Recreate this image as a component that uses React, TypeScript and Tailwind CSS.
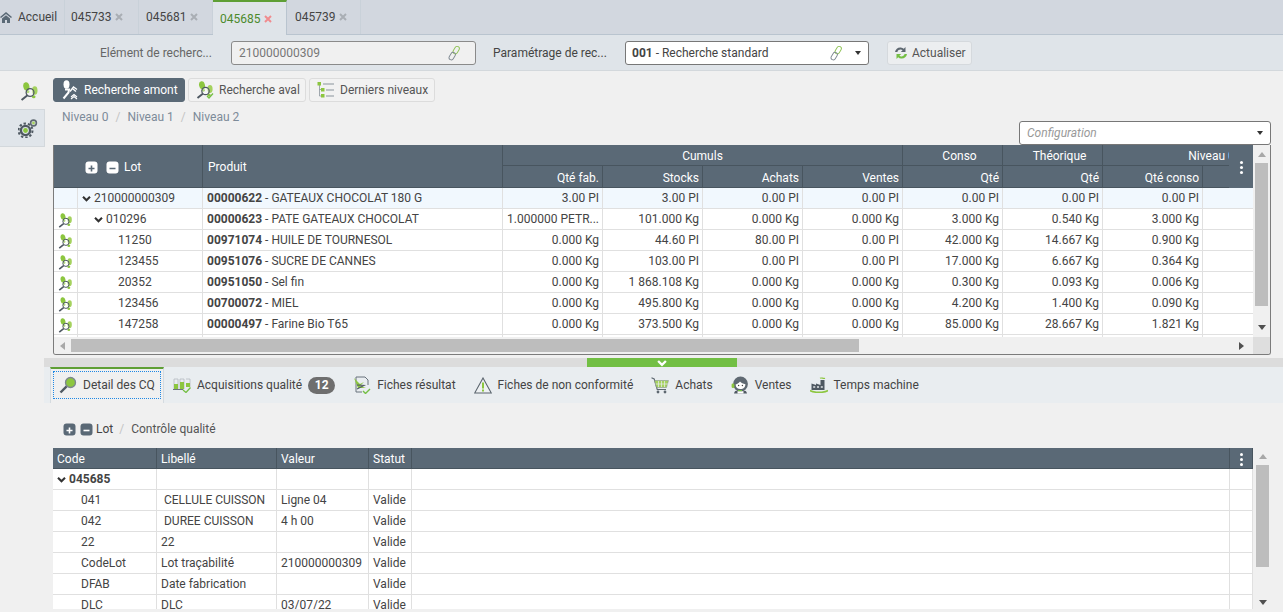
import React from "react";

const Chev = ({ w = 9, c = "#333" }: { w?: number; c?: string }) => (
  <svg width={w} height={w} viewBox="0 0 9 9" className="shrink-0" fill="none">
    <path d="M1 2.7L4.5 6.2L8 2.7" stroke={c} strokeWidth="2.1" />
  </svg>
);

const Close = ({ red }: { red?: boolean }) => (
  <svg width="8" height="8" viewBox="0 0 8 8" className="shrink-0">
    <path d="M1 1L7 7M7 1L1 7" stroke={red ? "#f08c8f" : "#a9aeb4"} strokeWidth="2" />
  </svg>
);

const Home = () => (
  <svg width="12" height="11" viewBox="0 0 12 11" className="shrink-0">
    <path d="M6 0L12 5L11 6L6 2L1 6L0 5Z" fill="#5a6976" />
    <path d="M2 6.5L6 3.2L10 6.5V11H7V8H5V11H2Z" fill="#5a6976" />
  </svg>
);

const Caret = () => (
  <svg width="6" height="4" viewBox="0 0 6 4" className="shrink-0">
    <path d="M0 0H6L3 4Z" fill="#333" />
  </svg>
);

const LinkIcon = () => (
  <svg width="14" height="16" viewBox="0 0 14 16" className="shrink-0" fill="none">
    <rect x="7" y="1" width="4.5" height="8" rx="2.2" transform="rotate(30 9 5)" stroke="#8cc152" strokeWidth="0.9" />
    <rect x="3" y="7" width="4.5" height="8" rx="2.2" transform="rotate(30 5 11)" stroke="#7d8790" strokeWidth="0.9" />
  </svg>
);

const Refresh = () => (
  <svg width="14" height="14" viewBox="0 0 14 14" className="shrink-0">
    <path d="M1 6C1.5 3 4 1.2 6.8 1.5C8 1.6 9 2 9.8 2.8L11.5 1V6H6.8L8.6 4.2C7 3 4 3.5 3.4 6Z" fill="#5d6770" />
    <path d="M13 8C12.5 11 10 12.8 7.2 12.5C6 12.4 5 12 4.2 11.2L2.5 13V8H7.2L5.4 9.8C7 11 10 10.5 10.6 8Z" fill="#74bf44" />
  </svg>
);

const Trace = ({ s = 18, check }: { s?: number; check?: boolean }) => (
  <svg width={s} height={s} viewBox="0 0 18 18" className="shrink-0" fill="none">
    <ellipse cx="6" cy="4.2" rx="2.9" ry="4" fill="#8cc63f" transform="rotate(-12 6 4.2)" />
    <ellipse cx="7.4" cy="9.3" rx="1.6" ry="1.4" fill="#8cc63f" />
    <ellipse cx="14" cy="8" rx="2.6" ry="4" fill="#a5d25e" />
    <ellipse cx="13" cy="14" rx="1.7" ry="1.5" fill="#8cc63f" />
    <circle cx="9.5" cy="10" r="3.7" stroke="#4d5761" strokeWidth="1.2" fill="#ffffff55" />
    <path d="M6.8 12.7L1.5 17" stroke="#4d5761" strokeWidth="1.9" />
    {check && <path d="M11 15L13 17L17 12.5" stroke="#74bf44" strokeWidth="1.3" />}
  </svg>
);

const Amont = () => (
  <svg width="18" height="20" viewBox="0 0 18 20" className="shrink-0" fill="none">
    <ellipse cx="5.5" cy="4.5" rx="3" ry="4.2" fill="#fff" />
    <path d="M4 9.5H8L7.5 12.5L2.5 18.5" stroke="#fff" strokeWidth="2" />
    <path d="M9 11.5L12.5 7L16 9.5M12 9L15 11.5" stroke="#fff" strokeWidth="1.4" />
    <path d="M10 17L13 14.5L16 17M10 19L13 16.5L16 19" stroke="#fff" strokeWidth="1.1" />
  </svg>
);

const TreeIcon = () => (
  <svg width="18" height="18" viewBox="0 0 18 18" className="shrink-0" fill="none">
    <path d="M2.5 3V15H5M2.5 8.5H5" stroke="#8a949c" strokeWidth="0.8" />
    <rect x="0.5" y="1" width="3.5" height="3.5" fill="#8cc63f" />
    <rect x="4" y="7" width="3.5" height="3.5" fill="#8cc63f" />
    <rect x="4" y="13" width="3.5" height="3.5" fill="#8cc63f" />
    <path d="M6 3H17M9 9H17M9 15H17" stroke="#8a949c" strokeWidth="1" />
  </svg>
);

const Gears = () => (
  <svg width="20" height="19" viewBox="0 0 20 19" className="shrink-0" fill="none">
    <circle cx="7.5" cy="11.5" r="7" stroke="#4f5962" strokeWidth="2" strokeDasharray="2.4 2" />
    <circle cx="7.5" cy="11.5" r="4.6" stroke="#4f5962" strokeWidth="2.4" />
    <circle cx="7.5" cy="11.5" r="2.4" fill="#8cc63f" />
    <circle cx="15.5" cy="4" r="2.9" stroke="#5f6972" strokeWidth="1.6" />
    <circle cx="15.5" cy="4" r="1.4" fill="#a5d25e" />
  </svg>
);

const Magnifier = () => (
  <svg width="18" height="18" viewBox="0 0 18 18" className="shrink-0" fill="none">
    <circle cx="11.5" cy="6.5" r="5" fill="#8cc63f" stroke="#7d8790" strokeWidth="1.3" />
    <path d="M7.6 10.4L1.5 16.5" stroke="#4f5962" strokeWidth="2.4" />
  </svg>
);

const Tubes = () => (
  <svg width="18" height="16" viewBox="0 0 18 16" className="shrink-0" fill="none">
    <path d="M1 2H5V12H1ZM7 2H11V12H7ZM13 2H17V10" stroke="#b4bac0" strokeWidth="0.8" />
    <path d="M1 7H5V12H1ZM7 5H11V12H7ZM13 6H17V10H13Z" fill="#8cc63f" />
    <path d="M0 12.5H10" stroke="#6b757e" strokeWidth="1" />
    <path d="M10 13L13 15.5L17.5 10.5" stroke="#74bf44" strokeWidth="1.3" />
  </svg>
);

const DocCheck = () => (
  <svg width="18" height="18" viewBox="0 0 18 18" className="shrink-0" fill="none">
    <path d="M3 1H12L15 4V9M3 1V16H9" stroke="#69737c" strokeWidth="1" />
    <path d="M1 2L7 8L11 6L7 10L13 12H5Z" fill="#8cc63f" />
    <path d="M4 9L11 9.5L4 13" stroke="#4f5962" strokeWidth="1.1" />
    <path d="M10 15L12.5 17.5L17 13" stroke="#74bf44" strokeWidth="1.4" />
  </svg>
);

const Warn = () => (
  <svg width="18" height="17" viewBox="0 0 18 17" className="shrink-0" fill="none">
    <path d="M9 1L17.3 16H0.7Z" stroke="#5a646d" strokeWidth="1.1" fill="#eef1f3" />
    <rect x="8" y="5.5" width="2" height="6" fill="#8cc63f" />
    <rect x="8" y="12.5" width="2" height="2" fill="#8cc63f" />
  </svg>
);

const Cart = () => (
  <svg width="18" height="17" viewBox="0 0 18 17" className="shrink-0" fill="none">
    <path d="M0.5 0.8L3.2 2L6.2 12.5H15" stroke="#5d6770" strokeWidth="1.1" />
    <path d="M3.5 3.5H17.5L15.5 10.5H5.5Z" fill="#a5d25e" stroke="#7d8790" strokeWidth="0.5" />
    <path d="M7.5 4V10M10.5 4V10M13.5 4V10M4.5 7H17" stroke="#e9edf0" strokeWidth="0.7" />
    <circle cx="7" cy="15" r="1.4" fill="#5d6770" />
    <circle cx="14" cy="15" r="1.4" fill="#5d6770" />
  </svg>
);

const Agent = () => (
  <svg width="18" height="18" viewBox="0 0 18 18" className="shrink-0" fill="none">
    <circle cx="9.5" cy="8" r="7.4" fill="#5f6972" />
    <path d="M4.6 8.4C6.5 8 8 7 9 5.6C10.2 7 12.2 8 14.4 8.2C14.4 11.4 12.2 13 9.5 13C6.8 13 4.6 11.4 4.6 8.4Z" fill="#fff" />
    <circle cx="7.6" cy="9.5" r="0.7" fill="#444" />
    <circle cx="11.4" cy="9.5" r="0.7" fill="#444" />
    <rect x="0.6" y="7.5" width="2.8" height="4.5" rx="1.3" fill="#8cc63f" />
    <path d="M3 17.5C3.4 15 5 14.4 6.5 14.4H12.5C14 14.4 15.6 15 16 17.5Z" fill="#4f5962" />
    <path d="M6.5 15.2H12.5V17.5H6.5Z" fill="#fff" />
    <path d="M7 14.6H11" stroke="#74bf44" strokeWidth="1.2" />
  </svg>
);

const Factory = () => (
  <svg width="18" height="16" viewBox="0 0 18 16" className="shrink-0" fill="none">
    <path d="M1.5 13V6.5L6 8V6.5L10.5 8V3H14.5V13Z" fill="#4f5962" />
    <path d="M10 1.2C11.5 0.4 13.5 2 15 1.2" stroke="#8cc63f" strokeWidth="1.2" />
    <path d="M3.2 10H5.2M7 10H9M10.8 10H12.8" stroke="#e2e5e8" strokeWidth="1.6" />
    <path d="M0 13.5C4 16 14 16 18 13.5" stroke="#8cc63f" strokeWidth="1.6" />
  </svg>
);

const Square = ({ minus, dark }: { minus?: boolean; dark?: boolean }) => (
  <svg width="13" height="13" viewBox="0 0 13 13" className="shrink-0">
    <rect x="0.5" y="0.5" width="12" height="12" rx="3" fill={dark ? "#5a6976" : "#fff"} />
    <path
      d={minus ? "M3.5 7.5H9.5" : "M3.5 7.5H9.5M6.5 4.5V10.5"}
      stroke={dark ? "#fff" : "#5a6976"}
      strokeWidth="1.6"
    />
  </svg>
);

const Tri = ({ d, c = "#666" }: { d: "u" | "d" | "l" | "r"; c?: string }) => {
  const p = { u: "M0 6H8L4 1Z", d: "M0 2H8L4 7Z", l: "M6 0V8L1 4Z", r: "M2 0V8L7 4Z" }[d];
  return (
    <svg width="8" height="8" viewBox="0 0 8 8" className="shrink-0">
      <path d={p} fill={c} />
    </svg>
  );
};

const Dots = () => (
  <div className="flex flex-col gap-[2px] items-center">
    <span className="w-[3px] h-[3px] bg-white rounded-full" />
    <span className="w-[3px] h-[3px] bg-white rounded-full" />
    <span className="w-[3px] h-[3px] bg-white rounded-full" />
  </div>
);

const Tab = ({ label, active, pl }: { label: string; active?: boolean; pl: string }) => (
  <div
    className={
      active
        ? `w-[74px] h-[35px] flex items-center gap-[4px] ${pl} border-t-2 border-r border-[#b9c4cf] border-t-[#5f9f35] bg-[#dfe4e9] text-[#4c8a2c]`
        : `w-[74px] h-[34px] flex items-center gap-[4px] ${pl} border-r border-[#c9d1d9] text-[#444]`
    }
  >
    <span>{label}</span>
    <Close red={active} />
  </div>
);

const Btn = ({
  icon,
  label,
  w,
  active,
}: {
  icon: React.ReactNode;
  label: string;
  w: string;
  active?: boolean;
}) => (
  <div
    className={`h-[24px] flex items-center gap-[5px] pl-[7px] rounded-[3px] border ${w} ${
      active ? "bg-[#5a6976] border-[#5a6976] text-white" : "bg-[#f2f2f2] border-[#dcdcdc] text-[#555]"
    }`}
  >
    {icon}
    <span className="whitespace-nowrap">{label}</span>
  </div>
);

const upperRows = [
  ["210000000309", "00000622", "GATEAUX CHOCOLAT 180 G", "3.00 PI", "3.00 PI", "0.00 PI", "0.00 PI", "0.00 PI", "0.00 PI", "0.00 PI"],
  ["010296", "00000623", "PATE GATEAUX CHOCOLAT", "1.000000 PETR...", "101.000 Kg", "0.000 Kg", "0.000 Kg", "3.000 Kg", "0.540 Kg", "3.000 Kg"],
  ["11250", "00971074", "HUILE DE TOURNESOL", "0.000 Kg", "44.60 PI", "80.00 PI", "0.00 PI", "42.000 Kg", "14.667 Kg", "0.900 Kg"],
  ["123455", "00951076", "SUCRE DE CANNES", "0.000 Kg", "103.00 PI", "0.00 PI", "0.00 PI", "17.000 Kg", "6.667 Kg", "0.364 Kg"],
  ["20352", "00951050", "Sel fin", "0.000 Kg", "1 868.108 Kg", "0.000 Kg", "0.000 Kg", "0.300 Kg", "0.093 Kg", "0.006 Kg"],
  ["123456", "00700072", "MIEL", "0.000 Kg", "495.800 Kg", "0.000 Kg", "0.000 Kg", "4.200 Kg", "1.400 Kg", "0.090 Kg"],
  ["147258", "00000497", "Farine Bio T65", "0.000 Kg", "373.500 Kg", "0.000 Kg", "0.000 Kg", "85.000 Kg", "28.667 Kg", "1.821 Kg"],
];

const lowerRows = [
  ["041", "\u00a0CELLULE CUISSON", "Ligne 04", "Valide"],
  ["042", "\u00a0DUREE CUISSON", "4 h 00", "Valide"],
  ["22", "22", "", "Valide"],
  ["CodeLot", "Lot traçabilité", "210000000309", "Valide"],
  ["DFAB", "Date fabrication", "", "Valide"],
  ["DLC", "DLC", "03/07/22", "Valide"],
];

const th = "border-r border-b border-[#48555f] font-normal p-0 pt-[2px] h-[21px]";
const td = "border-r border-b border-[#e0e0e0] p-0 h-[21px] whitespace-nowrap overflow-hidden";

function UpperTable() {
  return (
    <div className="ml-[9px] w-[1218px] h-[210px] border border-[#7b7b7b] border-t-0 rounded-b-[3px] flex flex-col bg-[#f0f0f0] overflow-hidden">
      <div className="flex h-[192px]">
        <div className="relative w-[1199px] overflow-hidden">
          <table className="table-fixed border-separate border-spacing-0 w-[1267px] bg-white text-[#444]">
            <colgroup>
              <col className="w-[24px]" />
              <col className="w-[125px]" />
              <col className="w-[300px]" />
              <col className="w-[100px]" />
              <col className="w-[100px]" />
              <col className="w-[100px]" />
              <col className="w-[100px]" />
              <col className="w-[100px]" />
              <col className="w-[100px]" />
              <col className="w-[100px]" />
              <col className="w-[118px]" />
            </colgroup>
            <thead className="bg-[#5a6976] text-white">
              <tr>
                <th colSpan={2} rowSpan={2} className={`${th} h-[43px]`}>
                  <div className="flex items-center gap-[8px] pl-[31px]">
                    <Square />
                    <Square minus />
                    <span className="ml-[-3px]">Lot</span>
                  </div>
                </th>
                <th rowSpan={2} className={`${th} text-left pl-[5px]`}>Produit</th>
                <th colSpan={4} className={th}>Cumuls</th>
                <th className={`${th} pl-[14px]`}>Conso</th>
                <th className={`${th} pl-[14px]`}>Théorique</th>
                <th colSpan={2} className={th}>Niveau 0</th>
              </tr>
              <tr>
                {["Qté fab.", "Stocks", "Achats", "Ventes", "Qté", "Qté", "Qté conso"].map((h, i) => (
                  <th key={i} className={`${th} h-[22px] text-right pr-[3px]`}>{h}</th>
                ))}
                <th className={`${th} h-[22px]`} />
              </tr>
            </thead>
            <tbody>
              {upperRows.map((r, i) => (
                <tr key={i} className={i === 0 ? "bg-[#f1f8fe]" : ""}>
                  <td className={`${td} ${i === 0 ? "border-[#dbe5ee]" : ""}`}>
                    {i > 0 && (
                      <div className="flex justify-center pt-[2px] pr-[1px]">
                        <Trace s={15} />
                      </div>
                    )}
                  </td>
                  <td className={`${td} ${i === 0 ? "border-[#dbe5ee]" : ""}`}>
                    <div
                      className={`flex items-center gap-[3px] ${
                        i === 0 ? "pl-[4px]" : i === 1 ? "pl-[16px]" : "pl-[40px]"
                      }`}
                    >
                      {i < 2 && <Chev />}
                      <span>{r[0]}</span>
                    </div>
                  </td>
                  <td className={`${td} pl-[4px] ${i === 0 ? "border-[#dbe5ee]" : ""}`}>
                    <span className="font-bold">{r[1]}</span> - {r[2]}
                  </td>
                  {r.slice(3).map((c, j) => (
                    <td key={j} className={`${td} text-right pr-[3px] ${i === 0 ? "border-[#dbe5ee]" : ""}`}>
                      {c}
                    </td>
                  ))}
                  <td className={`${td} border-r-0 ${i === 0 ? "border-[#dbe5ee]" : ""}`} />
                </tr>
              ))}
              <tr>
                <td colSpan={11} className="h-[21px] p-0">
                  <div className="h-[21px] flex">
                    <div className="w-[24px] border-r border-[#e0e0e0]" />
                    <div className="w-[125px] border-r border-[#e0e0e0]" />
                    <div className="w-[300px] border-r border-[#e0e0e0]" />
                    <div className="w-[100px] border-r border-[#e0e0e0]" />
                    <div className="w-[100px] border-r border-[#e0e0e0]" />
                    <div className="w-[100px] border-r border-[#e0e0e0]" />
                    <div className="w-[100px] border-r border-[#e0e0e0]" />
                    <div className="w-[100px] border-r border-[#e0e0e0]" />
                    <div className="w-[100px] border-r border-[#e0e0e0]" />
                    <div className="w-[100px] border-r border-[#e0e0e0]" />
                  </div>
                </td>
              </tr>
            </tbody>
          </table>
          <div className="absolute right-0 top-0 w-[24px] h-[43px] bg-[#5a6976] flex items-center justify-center pt-[1px]">
            <Dots />
          </div>
        </div>
        <div className="w-[17px] bg-[#f0f0f0] flex flex-col items-center pt-[6px]">
          <Tri d="u" c="#a8a8a8" />
          <div className="mt-[4px] w-[13px] h-[143px] bg-[#bdbdbd]" />
          <div className="mt-auto mb-[6px]">
            <Tri d="d" c="#505050" />
          </div>
        </div>
      </div>
      <div className="flex h-[17px]">
        <div className="w-[1199px] flex items-center bg-[#f0f0f0]">
          <div className="pl-[5px] w-[17px]">
            <Tri d="l" c="#a8a8a8" />
          </div>
          <div className="w-[788px] h-[13px] bg-[#bdbdbd]" />
          <div className="ml-auto pr-[8px]">
            <Tri d="r" c="#505050" />
          </div>
        </div>
        <div className="w-[17px] bg-[#dedede]" />
      </div>
    </div>
  );
}

function LowerTable() {
  return (
    <div className="ml-[9px] flex h-[161px] overflow-hidden">
      <table className="table-fixed border-separate border-spacing-0 w-[1200px] h-[168px] bg-white text-[#444]">
        <colgroup>
          <col className="w-[104px]" />
          <col className="w-[120px]" />
          <col className="w-[92px]" />
          <col className="w-[43px]" />
          <col className="w-[818px]" />
          <col className="w-[23px]" />
        </colgroup>
        <thead className="bg-[#5a6976] text-white">
          <tr>
            {["Code", "Libellé", "Valeur", "Statut", ""].map((h, i) => (
              <th key={i} className={`${th} text-left pl-[4px]`}>{h}</th>
            ))}
            <th className={th}>
              <div className="flex justify-center">
                <Dots />
              </div>
            </th>
          </tr>
        </thead>
        <tbody>
          <tr>
            <td className={`${td} font-bold`}>
              <div className="flex items-center gap-[3px] pl-[4px]">
                <Chev />
                <span>045685</span>
              </div>
            </td>
            <td className={td} />
            <td className={td} />
            <td className={td} />
            <td className={td} />
            <td className={td} />
          </tr>
          {lowerRows.map((r, i) => (
            <tr key={i}>
              <td className={`${td} pl-[28px]`}>{r[0]}</td>
              <td className={`${td} pl-[4px]`}>{r[1]}</td>
              <td className={`${td} pl-[4px]`}>{r[2]}</td>
              <td className={`${td} pl-[4px]`}>{r[3]}</td>
              <td className={td} />
              <td className={td} />
            </tr>
          ))}
        </tbody>
      </table>
      <div className="w-[17px] ml-[1px] flex flex-col items-center pt-[5px]">
        <Tri d="u" c="#a8a8a8" />
        <div className="mt-[4px] w-[13px] h-[102px] bg-[#bdbdbd]" />
        <div className="mt-[31px]">
          <Tri d="d" c="#505050" />
        </div>
      </div>
    </div>
  );
}

export default function App() {
  return (
    <div className="w-[1283px] h-[612px] overflow-hidden bg-[#f0f0f0] flex flex-col text-[12px] leading-[14px] text-[#444] font-[family-name:Roboto,sans-serif]">
      <div className="h-[35px] shrink-0 bg-[#d2d7df] border-b border-[#b9c4cf] flex items-start">
        <div className="w-[65px] h-[34px] flex items-center gap-[6px] border-r border-[#c9d1d9]">
          <Home />
          <span>Accueil</span>
        </div>
        <Tab label="045733" pl="pl-[6px]" />
        <Tab label="045681" pl="pl-[7px]" />
        <Tab label="045685" pl="pl-[7px]" active />
        <Tab label="045739" pl="pl-[8px]" />
      </div>

      <div className="h-[36px] shrink-0 bg-[#dfe4e9] border-b border-[#d3d8dc] flex items-start pt-[6px] pl-[100px]">
        <div className="w-[131px] h-[24px] flex items-center text-[#666]">Elément de recherc...</div>
        <div className="w-[245px] h-[24px] bg-[#f0f0f0] border border-[#8a8a8a] rounded-[3px] flex items-center pl-[7px] pr-[14px] text-[#777]">
          <span className="flex-1">210000000309</span>
          <LinkIcon />
        </div>
        <div className="w-[149px] h-[24px] flex items-center pl-[17px] text-[#444]">Paramétrage de rec...</div>
        <div className="w-[244px] h-[24px] bg-white border border-[#777] rounded-[3px] flex items-center pl-[6px] pr-[7px] text-[#444]">
          <span className="flex-1">
            <span className="font-bold">001</span> - Recherche standard
          </span>
          <LinkIcon />
          <span className="ml-[12px]">
            <Caret />
          </span>
        </div>
        <div className="ml-[18px] w-[85px] h-[24px] bg-[#eceef0] border border-[#d5d9dd] rounded-[3px] flex items-center gap-[4px] pl-[6px] text-[#555]">
          <Refresh />
          <span>Actualiser</span>
        </div>
      </div>

      <div className="flex flex-1 min-h-0">
        <div className="w-[45px] shrink-0 flex flex-col">
          <div className="h-[38px] flex items-center justify-end pr-[6px] pt-[2px]">
            <Trace s={19} />
          </div>
          <div className="h-[38px] bg-[#e0e5ea] border-y border-r border-[#d3d8dc] flex items-center justify-end pr-[6px]">
            <Gears />
          </div>
        </div>

        <div className="flex-1 min-w-0 flex flex-col -ml-[1px]">
          <div className="flex gap-[3px] pt-[7px] pl-[9px]">
            <Btn icon={<Amont />} label="Recherche amont" w="w-[132px]" active />
            <Btn icon={<Trace s={18} check />} label="Recherche aval" w="w-[118px]" />
            <Btn icon={<TreeIcon />} label="Derniers niveaux" w="w-[126px]" />
          </div>
          <div className="h-[43px] flex justify-between items-start pl-[18px] pr-[12px]">
            <div className="flex gap-[7px] mt-[8px] text-[#7d8b99]">
              <span>Niveau 0</span>
              <span className="text-[#c4c4c4]">/</span>
              <span>Niveau 1</span>
              <span className="text-[#c4c4c4]">/</span>
              <span>Niveau 2</span>
            </div>
            <div className="mt-[19px] w-[252px] h-[24px] bg-white border border-[#777] rounded-[3px] flex items-center pl-[7px] pr-[7px] text-[#999] italic">
              <span className="flex-1">Configuration</span>
              <Caret />
            </div>
          </div>
          <UpperTable />
          <div className="mt-[3px] h-[9px] shrink-0 bg-[#dcdcdc] pl-[543px]">
            <div className="w-[150px] h-[9px] bg-[#72bf44] flex justify-center items-center">
              <Chev w={10} c="#fff" />
            </div>
          </div>
          <div className="h-[36px] shrink-0 bg-[#e9edf0] flex items-center pl-[6px] text-[#444]">
            <div className="relative h-[36px] w-[114px] bg-[#f0f0f0] border-t-2 border-x border-t-[#5f9f35] border-x-[#d5dbe0] pt-[2px] px-[2px]">
              <div className="h-[28px] border border-dotted border-[#1e88e5] flex items-center gap-[6px] pl-[5px]">
                <Magnifier />
                <span>Detail des CQ</span>
              </div>
            </div>
            <div className="flex items-center gap-[6px] pl-[9px] pr-[9px]">
              <Tubes />
              <span>Acquisitions qualité</span>
              <span className="w-[27px] h-[17px] rounded-full bg-[#6e6e6e] text-white font-bold text-center leading-[17px]">12</span>
            </div>
            <div className="flex items-center gap-[6px] px-[9px]">
              <DocCheck />
              <span>Fiches résultat</span>
            </div>
            <div className="flex items-center gap-[6px] px-[9px]">
              <Warn />
              <span>Fiches de non conformité</span>
            </div>
            <div className="flex items-center gap-[6px] px-[9px]">
              <Cart />
              <span>Achats</span>
            </div>
            <div className="flex items-center gap-[6px] px-[9px]">
              <Agent />
              <span>Ventes</span>
            </div>
            <div className="flex items-center gap-[6px] px-[9px]">
              <Factory />
              <span>Temps machine</span>
            </div>
          </div>
          <div className="h-[45px] shrink-0 flex items-start pt-[20px] pl-[19px] gap-[4px]">
            <Square dark />
            <Square dark minus />
            <span className="ml-[-1px] mt-[-1px]">Lot</span>
            <span className="text-[#c4c4c4] ml-[2px] mt-[-1px]">/</span>
            <span className="ml-[3px] mt-[-1px] text-[#555]">Contrôle qualité</span>
          </div>
          <LowerTable />
        </div>
      </div>
    </div>
  );
}
